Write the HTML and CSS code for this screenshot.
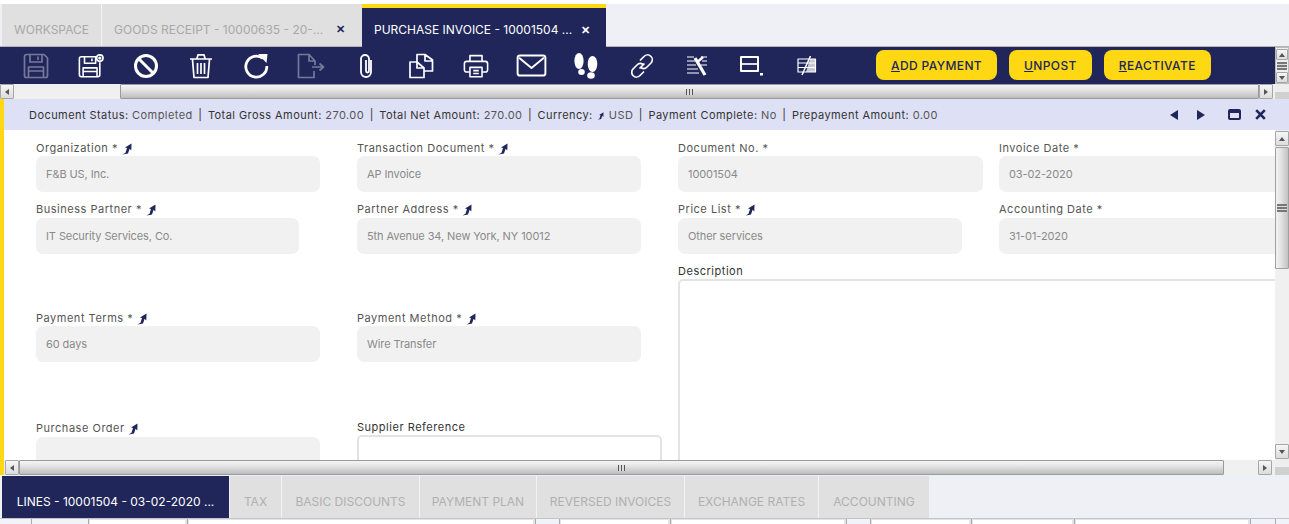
FILE: index.html
```html
<!DOCTYPE html>
<html lang="en">
<head>
<meta charset="utf-8">
<title>Purchase Invoice</title>
<link rel="stylesheet" href="styles.css">
</head>
<body>
<svg class="defs" width="0" height="0" aria-hidden="true">
  <symbol id="arrow" viewBox="0 0 10 12"><path d="M0.500 11.500 L3.500 9.800 L5 5 L3 4.400 L9.500 0.500 L9.300 7.600 L7.600 5.800 L6 10.500 L3.500 11 Z" fill="#20265a"/></symbol>
</svg>
<nav class="tabs">
  <div class="tab">WORKSPACE</div>
  <div class="tab tab-goods"><span class="tab-text">GOODS RECEIPT - 10000635 - 20-...</span><span class="close">✕</span></div>
  <div class="tab tab-active"><span class="tab-text">PURCHASE INVOICE - 10001504 ...</span><span class="close">✕</span></div>
</nav>
<div class="toolbar">
  <div class="tools">
    <span class="slot"><svg class="ti dim" viewBox="0 0 26 26"><path d="M3.500 1.500H21L24.500 5V22.500a2 2 0 0 1-2 2H3.500a2 2 0 0 1-2-2V3.500a2 2 0 0 1 2-2Z M7 1.500V9H19V1.500 M15 3.500V7 M5.500 24.500V14H20.500V24.500 M5.500 18H20.500"/></svg></span>
    <span class="slot"><svg class="ti" viewBox="0 0 28 26"><path d="M19.500 3H3.500a2 2 0 0 0-2 2V22.500a2 2 0 0 0 2 2H21.500a2 2 0 0 0 2-2V9 M7 3V10H19V3 M15 5V8 M5.500 24.500V15H20.500V24.500 M5.500 19H20.500"/><circle cx="23.500" cy="4.500" r="3.500"/><circle cx="23.500" cy="4.500" r="1" fill="#fff"/></svg></span>
    <span class="slot"><svg class="ti" viewBox="0 0 26 26"><circle cx="13" cy="13" r="10.500" stroke-width="3"/><path d="M5.500 5.500L20.500 20.500" stroke-width="3"/></svg></span>
    <span class="slot"><svg class="ti" viewBox="0 0 26 26"><path d="M2 6H24 M9 5.500L10 1.800H16L17 5.500 M4.500 6.500L6 24.500H20L21.500 6.500 M9.500 10V21 M13 10V21 M16.500 10V21"/></svg></span>
    <span class="slot"><svg class="ti" viewBox="0 0 26 26"><path d="M20 5.500A10.500 10.500 0 1 0 23.800 13" stroke-width="2.800"/><path d="M15 1H24.500L23.500 10Z" fill="#fff" stroke="none"/></svg></span>
    <span class="slot"><svg class="ti dim ti-export" viewBox="0 0 30 26"><path d="M14 1.500H2.500V24.500H18V18 M13 1.500L19 8V12 M13 1.500V8H19 M16 14H27 M23.500 10.500L27.500 14L23.500 17.500"/></svg></span>
    <span class="slot"><svg class="ti ti-clip" viewBox="0 0 18 28"><path d="M14 8V20a5 5 0 0 1-10 0V7a4 4 0 0 1 8 0V19a1.500 1.500 0 0 1-3 0V8" stroke-width="1.800"/></svg></span>
    <span class="slot"><svg class="ti" viewBox="0 0 26 26"><path d="M9 9H2V24.500H16V15L9 9V15H16 M9 9V1.500H17L24.500 7V18H16 M17 1.500V8H24.500"/></svg></span>
    <span class="slot"><svg class="ti" viewBox="0 0 28 26"><path d="M7.500 8V1.800H20.500V8 M7.500 19.500H4a2.500 2.500 0 0 1-2.500-2.500V10.500A2.500 2.500 0 0 1 4 8H24a2.500 2.500 0 0 1 2.500 2.500V17a2.500 2.500 0 0 1-2.500 2.500H20.500 M7.500 14.500H20.500V24.500H7.500Z M11 18H17 M11 21H17"/></svg></span>
    <span class="slot"><svg class="ti ti-mail" viewBox="0 0 32 24"><rect x="1.500" y="1.500" width="29" height="21" rx="2.500" stroke-width="2"/><path d="M3 4L16 14.500L29 4" stroke-width="2"/></svg></span>
    <span class="slot"><svg class="ti ti-steps" viewBox="0 0 24 26"><g fill="#fff" stroke="none"><ellipse cx="5" cy="8" rx="4.600" ry="8"/><ellipse cx="7.500" cy="19" rx="3.300" ry="3"/><ellipse cx="18.500" cy="11" rx="4.800" ry="8"/><ellipse cx="17" cy="22.500" rx="3.800" ry="3.200"/></g></svg></span>
    <span class="slot"><svg class="ti" viewBox="0 0 26 26"><path d="M10.500 15.500L15.500 10.500 M11 7.500L15 3.500a4.500 4.500 0 0 1 7 6.500L18 14a4.500 4.500 0 0 1-6 .5 M15 18.500L11 22.500a4.500 4.500 0 0 1-7-6.500L8 12a4.500 4.500 0 0 1 6-.5"/></svg></span>
    <span class="slot"><svg class="ti ti-tools" viewBox="0 0 22 22"><path d="M1 2H8 M15 2H21 M1 6H9 M16 6H21 M1 10H10 M15 10H21 M1 14H12 M1 18H13" stroke-width="1.200"/><path d="M9 3L19 20" stroke-width="3.200"/><path d="M17 2L11.500 7" stroke-width="2.400"/></svg></span>
    <span class="slot"><svg class="ti ti-split" viewBox="0 0 24 20"><rect x="1" y="1" width="17" height="14" stroke-width="2"/><path d="M1 8H18" stroke-width="1.700"/><path d="M20 17H23V19.500H20Z" fill="#fff" stroke="none"/></svg></span>
    <span class="slot"><svg class="ti ti-note" viewBox="0 0 20 20"><path d="M13 3H18.500V16H9Z" fill="#fff" fill-opacity=".75" stroke="none"/><path d="M1 3H18.500V16H1Z M1 7H18.500 M1 11.500H18.500" stroke-width="1.200"/><path d="M13.500 0L5 19" stroke-width="1.500"/></svg></span>
  </div>
  <div class="actions">
    <button class="action"><u>A</u>DD PAYMENT</button>
    <button class="action"><u>U</u>NPOST</button>
    <button class="action"><u>R</u>EACTIVATE</button>
  </div>
  <div class="mini-scroll">
    <span class="sb-btn"><i class="tri tri-up"></i></span>
    <span class="grip-v"></span>
    <span class="sb-btn"><i class="tri tri-down"></i></span>
  </div>
</div>
<div class="hbar">
  <div class="hscroll hscroll-top">
    <span class="sb-btn sb-h"><i class="tri tri-left"></i></span>
    <span class="track track-a"></span>
    <span class="thumb"><span class="grip-h"></span></span>
    <span class="sb-btn sb-h"><i class="tri tri-right"></i></span>
  </div>
  <div class="corner"></div>
</div>
<main class="doc">
  <div class="status">
    <p class="status-text"><b>Document Status:</b> Completed<em>|</em><b>Total Gross Amount:</b> 270.00<em>|</em><b>Total Net Amount:</b> 270.00<em>|</em><b>Currency:</b> <svg class="lnk lnk-sm"><use href="#arrow"/></svg> USD<em>|</em><b>Payment Complete:</b> No<em>|</em><b>Prepayment Amount:</b> 0.00</p>
    <div class="status-icons">
      <svg class="si" viewBox="0 0 8 10"><path d="M8 0V10L0 5Z"/></svg>
      <svg class="si si-next" viewBox="0 0 8 10"><path d="M0 0V10L8 5Z"/></svg>
      <svg class="si si-max" viewBox="0 0 13 11"><path fill-rule="evenodd" d="M2 0H11a2 2 0 0 1 2 2V9a2 2 0 0 1-2 2H2a2 2 0 0 1-2-2V2a2 2 0 0 1 2-2ZM2 4V9H11V4Z"/></svg>
      <svg class="si si-x" viewBox="0 0 11 11"><path d="M1.200 1.200L9.800 9.800M9.800 1.200L1.200 9.800" stroke="#20265a" stroke-width="2.600" fill="none"/></svg>
    </div>
  </div>
  <div class="form-wrap">
    <div class="form">
      <div class="field"><label>Organization * <svg class="lnk"><use href="#arrow"/></svg></label><div class="input">F&amp;B US, Inc.</div></div>
      <div class="field"><label>Transaction Document * <svg class="lnk"><use href="#arrow"/></svg></label><div class="input">AP Invoice</div></div>
      <div class="field"><label>Document No. *</label><div class="input w305">10001504</div></div>
      <div class="field"><label>Invoice Date *</label><div class="input">03-02-2020</div></div>

      <div class="field low"><label>Business Partner * <svg class="lnk"><use href="#arrow"/></svg></label><div class="input w263">IT Security Services, Co.</div></div>
      <div class="field low"><label>Partner Address * <svg class="lnk"><use href="#arrow"/></svg></label><div class="input">5th Avenue 34, New York, NY 10012</div></div>
      <div class="field low"><label>Price List * <svg class="lnk"><use href="#arrow"/></svg></label><div class="input">Other services</div></div>
      <div class="field low"><label>Accounting Date *</label><div class="input">31-01-2020</div></div>

      <div class="field desc"><label class="dark">Description</label><div class="box box-desc"></div></div>

      <div class="field r4 col1"><label>Payment Terms * <svg class="lnk"><use href="#arrow"/></svg></label><div class="input">60 days</div></div>
      <div class="field r4 col2"><label>Payment Method * <svg class="lnk"><use href="#arrow"/></svg></label><div class="input">Wire Transfer</div></div>

      <div class="field low r5 col1"><label>Purchase Order <svg class="lnk"><use href="#arrow"/></svg></label><div class="input"></div></div>
      <div class="field lift r5 col2"><label class="dark">Supplier Reference</label><div class="box w305"></div></div>
    </div>
    <div class="vscroll">
      <span class="sb-btn"><i class="tri tri-up"></i></span>
      <span class="vthumb"><span class="grip-v"></span></span>
      <span class="track"></span>
      <span class="sb-btn"><i class="tri tri-down"></i></span>
    </div>
  </div>
  <div class="hbar hbar-low">
    <div class="hscroll hscroll-low">
      <span class="sb-btn sb-h"><i class="tri tri-left"></i></span>
      <span class="thumb"><span class="grip-h"></span></span>
      <span class="track track-b"></span>
      <span class="sb-btn sb-h"><i class="tri tri-right"></i></span>
    </div>
    <div class="corner"></div>
  </div>
</main>
<nav class="subtabs">
  <div class="subtab subtab-active">LINES - 10001504 - 03-02-2020 ...</div>
  <div class="subtab st1">TAX</div>
  <div class="subtab st2">BASIC DISCOUNTS</div>
  <div class="subtab st3">PAYMENT PLAN</div>
  <div class="subtab st4">REVERSED INVOICES</div>
  <div class="subtab st5">EXCHANGE RATES</div>
  <div class="subtab st6">ACCOUNTING</div>
</nav>
<div class="grid-head">
  <span class="gc c1"></span><span class="gc c2"></span><span class="gc c3 wh"></span><span class="gc c4 wh"></span><span class="gc c5"></span><span class="gc c6 wh"></span><span class="gc c7 wh"></span><span class="gc c8"></span><span class="gc c9 wh"></span><span class="gc c10 wh"></span><span class="gc c11 wh"></span><span class="gc c12"></span><span class="gc c13"></span>
</div>
</body>
</html>
```

FILE: styles.css
```css
* { box-sizing: border-box; }
html, body { margin: 0; padding: 0; }
body {
  width: 1289px; height: 524px; overflow: hidden;
  background: #eff0f5; color: #333;
  font-family: "Inter", "Liberation Sans", sans-serif;
  font-size: 11px;
  border-top: 4px solid #fff;
}
.defs { position: absolute; }

.tabs { display: flex; height: 43px; padding-left: 2px; border-bottom: 1px solid #b4b4b8; }
.tab {
  display: flex; align-items: center; justify-content: space-between;
  width: 100px; padding: 8px 12px 0; height: 42px;
  background: #e0e0e0; color: #a8a8a8; font-size: 12px;
  border-right: 1px solid #f2f2f2; white-space: nowrap;
}
.tab-goods { width: 260px; padding-right: 17px; border-right: 0; }
.tab-goods .close { color: #20265a; }
.tab-active {
  width: 244px; padding-right: 16px; padding-top: 4px; background: #20265a; color: #fff; border-right: 0;
  border-top: 4px solid #fdd813; height: 43px;
}
.close { font-size: 11px; font-weight: 700; }

.toolbar { display: flex; height: 37px; background: #20265a; }
.tools { display: flex; width: 876px; padding-left: 8px; }
.slot { width: 55.100px; height: 37px; flex: none; display: flex; align-items: center; justify-content: center; }
.ti { width: 26px; height: 26px; display: block; fill: none; stroke: #fff; stroke-width: 1.700; flex: none; stroke-linejoin: round; }
.dim { opacity: .38; }
.ti-export { width: 30px; }
.ti-clip { width: 18px; height: 28px; }
.ti-mail { width: 31px; height: 23px; }
.ti-steps { width: 24px; height: 26px; }
.ti-tools { width: 22px; height: 22px; }
.ti-split { width: 24px; height: 20px; }
.ti-note { width: 20px; height: 20px; }
.actions { display: flex; gap: 12px; width: 399px; padding-top: 3px; }
.action {
  height: 30px; padding: 0 15px; border: 0; border-radius: 8px;
  background: #fdd813; color: #20265a; font: 500 12px "Inter", "Liberation Sans", sans-serif; letter-spacing: .38px;
}
.mini-scroll { width: 14px; display: flex; flex-direction: column; justify-content: space-between; background: #eee; padding: 1px 0 0; align-items: center; border: 1px solid #bbb; }
.mini-scroll .sb-btn { height: 11px; }

.sb-btn {
  display: flex; align-items: center; justify-content: center; flex: none;
  width: 100%; height: 15px; background: linear-gradient(#f6f6f6, #dcdcdc);
  border: 1px solid #a6a6a6; border-radius: 1px;
}
.sb-h { width: 14px; height: 15px; }
.tri { width: 0; height: 0; display: block; border: 3px solid transparent; }
.tri-up { border-bottom: 4px solid #555; border-top: 0; }
.tri-down { border-top: 4px solid #555; border-bottom: 0; }
.tri-left { border-right: 4px solid #555; border-left: 0; }
.tri-right { border-left: 4px solid #555; border-right: 0; }

.hbar { display: flex; height: 15px; background: #f0f0f0; }
.hscroll { display: flex; flex: none; width: 1275px; }
.corner { flex: 1; background: linear-gradient(#eeeeee 50%, #d0d0d0 50%); }
.track { background: #f0f0f0; display: block; flex: none; }
.track-a { width: 106px; }
.track-b { width: 34px; }
.thumb {
  flex: 1; display: flex; align-items: center; justify-content: center;
  background: linear-gradient(#f4f4f4, #e6e6e6 35%, #bdbdbd);
  border: 1px solid #9a9a9a; border-radius: 1px;
}
.grip-h { width: 7px; height: 6px; background: repeating-linear-gradient(90deg, #555 0 1px, #ddd 1px 3px); }
.grip-v { width: 10px; height: 8px; background: repeating-linear-gradient(#777 0 2px, #ddd 2px 3px); display: block; flex: none; }
.hscroll-top .sb-h:last-child { margin-right: 2px; }
.hscroll-low { width: 1271px; padding-left: 1px; }
.hscroll-low .sb-h:last-child { margin-right: 3px; }

.doc { border-left: 4px solid #fdd813; }
.status {
  display: flex; align-items: center; justify-content: space-between;
  height: 31px; margin-left: -4px; padding-left: 25px; background: #dee0f5;
  border-left: 4px solid #fdd813;
}
.status-text { margin: 0; font-size: 11px; color: #555; white-space: nowrap; letter-spacing: .44px; }
.status-text b { font-weight: 400; color: #333; }
.status-text em { font-style: normal; color: #333; margin: 0 5.500px; }
.status-icons { display: flex; align-items: center; width: 119px; flex: none; }
.si { width: 8px; height: 10px; fill: #20265a; flex: none; margin-right: 19px; }
.si-next { margin-right: 23px; }
.si-max { width: 13px; height: 11px; margin-right: 14px; }
.si-x { width: 11px; height: 11px; margin: 0; }

.form-wrap { display: flex; height: 330px; background: #fff; }
.form {
  flex: 1; overflow: hidden; min-width: 0;
  display: grid; grid-template-columns: repeat(4, 321px); grid-template-rows: 61px 62px 47px 110px auto;
  padding: 10px 0 0 32px;
}
.field { display: flex; flex-direction: column; min-width: 0; }
.field label { height: 16px; line-height: 16px; font-size: 11px; color: #555; white-space: nowrap; letter-spacing: .52px; }
.field label.dark { color: #333; }
.lnk { width: 10px; height: 12px; margin-left: 0; vertical-align: -3px; }
.lnk-sm { width: 7px; height: 8px; margin: 0 1px 0 1px; vertical-align: -1px; }
.input {
  width: 284px; height: 36px; flex: none; padding: 0 10px; border-radius: 7px;
  background: #f1f1f1; color: #8a8a8a; font-size: 11px; line-height: 36px; white-space: nowrap; letter-spacing: -.09px;
}
.low .input { margin-top: 1px; }
.w263 { width: 263px; }
.w305 { width: 305px; }
.box { flex: none; height: 36px; border: 2px solid #e3e3e3; border-radius: 5px; background: #fff; }
.desc { grid-column: 3 / 5; grid-row: 3 / 6; }
.box-desc { width: 620px; height: 300px; }
.r4 { grid-row: 4; }
.r5 { grid-row: 5; }
.col1 { grid-column: 1; }
.col2 { grid-column: 2; }
.lift { margin-top: -1px; }

.vscroll { width: 14px; flex: none; display: flex; flex-direction: column; background: #eee; padding: 1px 0; }
.vthumb {
  height: 122px; flex: none; display: flex; align-items: center; justify-content: center;
  background: linear-gradient(90deg, #f2f2f2, #e4e4e4 40%, #c2c2c2);
  border: 1px solid #a0a0a0; border-radius: 1px; margin-top: 1px;
}
.vscroll .track { flex: 1; }

.subtabs { display: flex; height: 44px; padding-left: 2px; padding-top: 1px; border-bottom: 1px solid #c4c4c8; }
.subtab {
  display: flex; align-items: center; justify-content: center;
  height: 42px; padding-top: 8px; background: #e0e0e0; color: #b0b0b0; font-size: 12px; white-space: nowrap;
  border-right: 1px solid #f2f2f2;
}
.subtab-active { width: 227px; background: #20265a; color: #fff; border-right: 0; margin-right: 1px; }
.st1 { width: 52px; } .st2 { width: 138px; } .st3 { width: 117px; } .st4 { width: 148px; } .st5 { width: 134px; } .st6 { width: 110px; border-right: 0; }

.grid-head { display: flex; height: 5px; background: #e4e4e6; }
.gc { display: block; height: 100%; border-right: 1px solid #aaa; flex: none; background: #f0f4fa; }
.gc.wh { background: linear-gradient(#fff, #fff) content-box; padding: 1px 2px 0 1px; }
.c1 { width: 32px; } .c2 { width: 57px; } .c3 { width: 99px; } .c4 { width: 348px; } .c5 { width: 24px; } .c6 { width: 111px; } .c7 { width: 176px; } .c8 { width: 24px; } .c9 { width: 101px; } .c10 { width: 103px; } .c11 { width: 176px; } .c12 { width: 25px; } .c13 { width: 13px; border-right: 0; }
```
